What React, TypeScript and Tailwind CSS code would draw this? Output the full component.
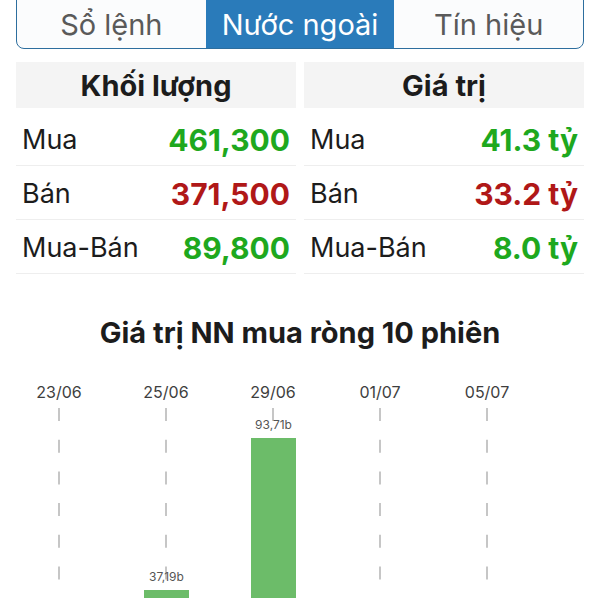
import React from 'react';

const font = { fontFamily: 'Inter, "Noto Sans", sans-serif' };

const tabs = ['Sổ lệnh', 'Nước ngoài', 'Tín hiệu'];

type Row = { label: string; value: string; up: boolean };

const volumeRows: Row[] = [
  { label: 'Mua', value: '461,300', up: true },
  { label: 'Bán', value: '371,500', up: false },
  { label: 'Mua-Bán', value: '89,800', up: true },
];

const valueRows: Row[] = [
  { label: 'Mua', value: '41.3 tỷ', up: true },
  { label: 'Bán', value: '33.2 tỷ', up: false },
  { label: 'Mua-Bán', value: '8.0 tỷ', up: true },
];

function StatTable({ title, rows }: { title: string; rows: Row[] }) {
  return (
    <div className="flex flex-col">
      <div className="mb-[4px] flex h-[46px] items-center justify-center bg-[#f4f4f4] pt-[2px] text-[29px] font-bold text-[#1c1c1c]">
        {title}
      </div>
      {rows.map(r => (
        <div
          key={r.label}
          className="flex h-[54px] items-center justify-between border-b border-[#eeeeee] px-[6px] pt-[3px]"
        >
          <span className="text-[27px] text-[#1c1c1c]">{r.label}</span>
          <span className={`text-[30px] font-bold ${r.up ? 'text-[#1ea81e]' : 'text-[#b01818]'}`}>{r.value}</span>
        </div>
      ))}
    </div>
  );
}

const gridX = [59, 166, 273, 380, 487];
const dates = ['23/06', '25/06', '29/06', '01/07', '05/07'];

const bars = [
  { x: 144, top: 212, label: '37,19b' },
  { x: 251, top: 60, label: '93,71b' },
];

function NetBuyChart() {
  return (
    <svg width="600" height="220" viewBox="0 0 600 220" className="block">
      {gridX.map((x, i) => (
        <g key={x}>
          <text x={x} y={20} textAnchor="middle" fontSize="16" fill="#3e3e3e" fontFamily="Inter, sans-serif">
            {dates[i]}
          </text>
          <line x1={x} y1={30} x2={x} y2={220} stroke="#b4b4b4" strokeWidth="1.5" strokeDasharray="13 18.7" />
        </g>
      ))}
      {bars.map(b => (
        <g key={b.label}>
          <rect x={b.x} y={b.top} width={45} height={220 - b.top} fill="#6cbc69" />
          <text x={b.x + 22.5} y={b.top - 9} textAnchor="middle" fontSize="12" fill="#555555" fontFamily="Inter, sans-serif">
            {b.label}
          </text>
        </g>
      ))}
    </svg>
  );
}

export default function App() {
  return (
    <div className="h-[600px] w-[600px] overflow-hidden bg-white" style={font}>
      {/* Segment tabs */}
      <div className="mx-4 mt-[-8px] flex h-[57px] overflow-hidden rounded-lg border-[1.5px] border-[#2d6e9e] bg-[#fbfcfd]">
        {tabs.map((t, i) => (
          <div
            key={t}
            className={`flex flex-1 items-center justify-center pt-[8px] text-[29px] ${
              i === 1 ? 'bg-[#2a7bba] text-white' : 'text-[#5a5a5a]'
            }`}
          >
            {t}
          </div>
        ))}
      </div>

      {/* Volume / value tables */}
      <div className="mx-4 mt-[13px] grid grid-cols-2 gap-2">
        <StatTable title="Khối lượng" rows={volumeRows} />
        <StatTable title="Giá trị" rows={valueRows} />
      </div>

      <div className="mt-[43px] text-center text-[29px] font-bold leading-[32px] text-[#1c1c1c]">
        Giá trị NN mua ròng 10 phiên
      </div>

      <div className="mt-[29px]">
        <NetBuyChart />
      </div>
    </div>
  );
}
